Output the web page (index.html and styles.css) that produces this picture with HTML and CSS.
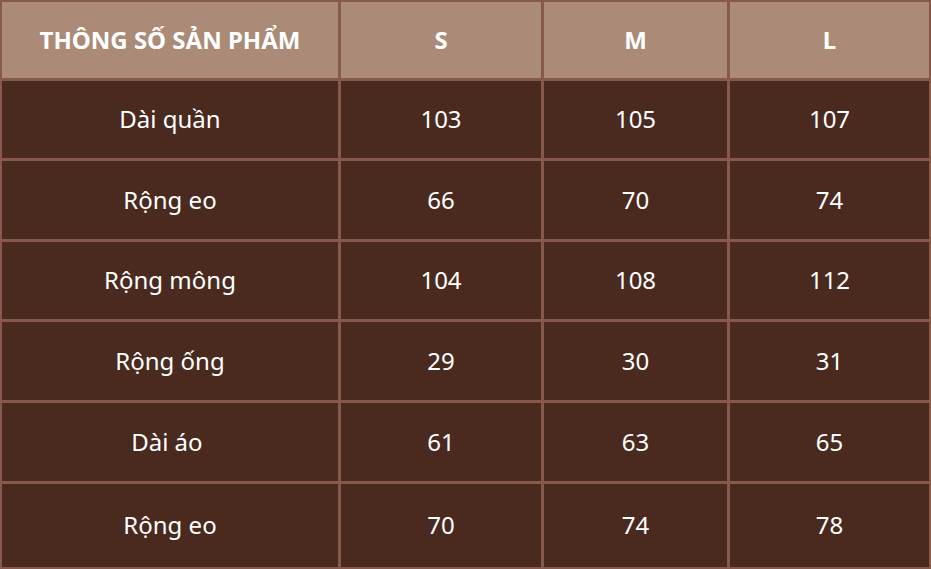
FILE: index.html
```html
<!DOCTYPE html>
<html lang="vi">
<head>
<meta charset="utf-8">
<link rel="stylesheet" href="styles.css">
</head>
<body>
<div class="table">
  <div class="cell head">THÔNG SỐ SẢN PHẨM</div>
  <div class="cell head">S</div>
  <div class="cell head">M</div>
  <div class="cell head">L</div>

  <div class="cell">Dài quần</div>
  <div class="cell">103</div>
  <div class="cell">105</div>
  <div class="cell">107</div>

  <div class="cell">Rộng eo</div>
  <div class="cell">66</div>
  <div class="cell">70</div>
  <div class="cell">74</div>

  <div class="cell">Rộng mông</div>
  <div class="cell">104</div>
  <div class="cell">108</div>
  <div class="cell">112</div>

  <div class="cell">Rộng ống</div>
  <div class="cell">29</div>
  <div class="cell">30</div>
  <div class="cell">31</div>

  <div class="cell">Dài áo&nbsp;</div>
  <div class="cell">61</div>
  <div class="cell">63</div>
  <div class="cell">65</div>

  <div class="cell">Rộng eo</div>
  <div class="cell">70</div>
  <div class="cell">74</div>
  <div class="cell">78</div>
</div>
</body>
</html>
```

FILE: styles.css
```css
html, body {
  margin: 0;
  padding: 0;
  background: #87594a;
}

.table {
  width: 931px;
  height: 569px;
  box-sizing: border-box;
  padding: 2px;
  display: grid;
  grid-template-columns: 336px 200px 183px 199px;
  grid-template-rows: 76px 77px 78px 77px 78px 78px 83px;
  gap: 3px;
  background: #87594a;
  font-family: "Noto Sans", "Open Sans", sans-serif;
  font-size: 24px;
  line-height: 1.3;
  color: #ffffff;
}

.cell {
  background: #4a2a1f;
  display: flex;
  align-items: center;
  justify-content: center;
  padding-bottom: 1px;
}

.cell.head {
  background: #ab8b77;
  font-weight: 700;
}
```
